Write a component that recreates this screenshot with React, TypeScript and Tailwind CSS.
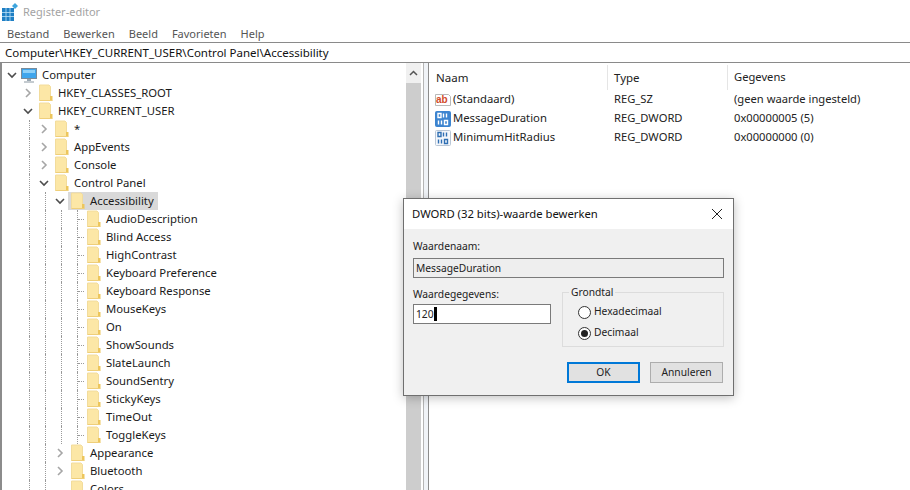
const menus = ['Bestand', 'Bewerken', 'Beeld', 'Favorieten', 'Help'];

type Node = { label: string; level: number; arrow?: 'open' | 'closed'; selected?: boolean };

const tree: Node[] = [
  { label: 'HKEY_CLASSES_ROOT', level: 1, arrow: 'closed' },
  { label: 'HKEY_CURRENT_USER', level: 1, arrow: 'open' },
  { label: '*', level: 2, arrow: 'closed' },
  { label: 'AppEvents', level: 2, arrow: 'closed' },
  { label: 'Console', level: 2, arrow: 'closed' },
  { label: 'Control Panel', level: 2, arrow: 'open' },
  { label: 'Accessibility', level: 3, arrow: 'open', selected: true },
  { label: 'AudioDescription', level: 4 },
  { label: 'Blind Access', level: 4 },
  { label: 'HighContrast', level: 4 },
  { label: 'Keyboard Preference', level: 4 },
  { label: 'Keyboard Response', level: 4 },
  { label: 'MouseKeys', level: 4 },
  { label: 'On', level: 4 },
  { label: 'ShowSounds', level: 4 },
  { label: 'SlateLaunch', level: 4 },
  { label: 'SoundSentry', level: 4 },
  { label: 'StickyKeys', level: 4 },
  { label: 'TimeOut', level: 4 },
  { label: 'ToggleKeys', level: 4 },
  { label: 'Appearance', level: 3, arrow: 'closed' },
  { label: 'Bluetooth', level: 3, arrow: 'closed' },
  { label: 'Colors', level: 3 },
];

const values = [
  { name: '(Standaard)', type: 'REG_SZ', data: '(geen waarde ingesteld)', icon: 'ab' },
  { name: 'MessageDuration', type: 'REG_DWORD', data: '0x00000005 (5)', icon: 'bin', active: true },
  { name: 'MinimumHitRadius', type: 'REG_DWORD', data: '0x00000000 (0)', icon: 'bin' },
];

function Chevron({ open }: { open: boolean }) {
  return (
    <svg width="16" height="18" viewBox="0 0 16 18" fill="none" stroke={open ? '#4d4d4d' : '#a6a6a6'} strokeWidth="1.6">
      {open ? <path d="M4 7l4 4 4-4" /> : <path d="M6 5l4 4-4 4" />}
    </svg>
  );
}

function Folder() {
  return (
    <svg width="14" height="18" viewBox="0 0 14 18" className="shrink-0">
      <path d="M0.500 1h9.500l1.500 1.500V16.500H0.500z" fill="#fce7a6" stroke="#f2dc9c" />
      <path d="M11 12h2.500v4.500H11z" fill="#edc65c" />
      <path d="M0.500 16.500h13" stroke="#efcf7a" />
    </svg>
  );
}

function MonitorIcon() {
  return (
    <svg width="16" height="16" viewBox="0 0 16 16" className="shrink-0">
      <rect x="0.5" y="1.5" width="15" height="10" fill="#3fa5ec" stroke="#7a8b99" />
      <rect x="2" y="3" width="12" height="3" fill="#8fd0f7" />
      <path d="M6 12h4v2H6z" fill="#9aa7b1" />
      <path d="M3 15h10" stroke="#8a97a1" />
    </svg>
  );
}

function ValueIcon({ kind, active }: { kind: string; active?: boolean }) {
  if (kind === 'ab') {
    return (
      <svg width="16" height="16" viewBox="0 0 16 16" className="shrink-0">
        <path d="M0.500 2.500h13l2 2v9H0.500z" fill="#fff" stroke="#b9b9b9" />
        <text x="1" y="10.500" fontSize="10" fontWeight="700" fontFamily="Liberation Sans" fill="#d2492a">ab</text>
      </svg>
    );
  }
  const ink = active ? '#fff' : '#2f6fb3';
  return (
    <svg width="16" height="16" viewBox="0 0 16 16" className="shrink-0">
      <rect x="0.5" y="0.5" width="15" height="15" rx="1" fill={active ? '#3c84d0' : '#f4f7fb'} stroke={active ? '#3c84d0' : '#b9c6d6'} />
      <path d="M3 2.500h3v4H3zM8.500 2.500v4M11.500 2.500v4M3.500 9.500v4M6.500 9.500v4M9.500 9.500h3v4h-3z" fill="none" stroke={ink} strokeWidth="1.4" />
    </svg>
  );
}

function TreeRow({ node }: { node: Node }) {
  return (
    <div className="flex h-[18px] items-center">
      <div className="w-[2px] shrink-0" />
      {/* guides for the open parents */}
      {node.level >= 1 && <div className="h-full w-4 shrink-0" />}
      {node.level >= 2 && <div className="ml-[9px] h-full w-[7px] shrink-0 border-l border-dotted border-[#9a9a9a]" />}
      {node.level >= 3 && <div className="ml-[9px] h-full w-[7px] shrink-0 border-l border-dotted border-[#9a9a9a]" />}
      {node.level >= 4 && <div className="ml-[9px] h-full w-[7px] shrink-0 border-l border-dotted border-[#9a9a9a]" />}
      {node.level === 4 ? (
        <div className="ml-[9px] flex h-full w-[7px] shrink-0 flex-col border-l border-dotted border-[#9a9a9a]">
          <div className="h-[9px]" />
          <div className="border-t border-dotted border-[#9a9a9a]" />
        </div>
      ) : (
        <div className="w-4 shrink-0">{node.arrow && <Chevron open={node.arrow === 'open'} />}</div>
      )}
      <div className={`flex h-full items-center pl-[3px] ${node.selected ? 'bg-[#d9d9d9]' : ''}`}>
        <Folder />
        <span className="whitespace-nowrap pl-[5px] pr-[4px] text-[11.3px] text-[#1a1a1a]">{node.label}</span>
      </div>
    </div>
  );
}

function Dialog() {
  return (
    <div className="absolute left-[403px] top-[198px] h-[198px] w-[331px] border border-[#6f6f6f] bg-[#f0f0f0] shadow-[0_2px_10px_rgba(0,0,0,0.25)]">
      <div className="flex h-[30px] items-center justify-between bg-white pl-[8px] pr-[10px]">
        <span className="text-[11.3px] text-[#111]">DWORD (32 bits)-waarde bewerken</span>
        <svg width="12" height="12" viewBox="0 0 12 12" stroke="#222" strokeWidth="1">
          <path d="M1 1l10 10M11 1L1 11" />
        </svg>
      </div>
      <div className="px-[9px] pt-[8px] text-[10.25px] text-[#222]">
        <div className="leading-[18px]">Waardenaam:</div>
        <div className="mt-[3px] flex h-[20px] items-center border border-[#7a7a7a] bg-[#eeeeee] pl-[2px] leading-none">
          MessageDuration
        </div>
        <div className="mt-[7px] flex gap-[11px]">
          <div className="w-[138px]">
            <div className="leading-[18px]">Waardegegevens:</div>
            <div className="mt-[1px] flex h-[20px] items-center border border-[#7a7a7a] bg-white pl-[2px] leading-none">
              120
              <span className="h-[14px] w-[3px] bg-black" />
            </div>
          </div>
          <div className="relative mt-[7px] h-[55px] w-[162px] border border-[#dcdcdc] pl-[15px] pt-[9px]">
            <span className="absolute -top-[8px] left-[6px] bg-[#f0f0f0] px-[2px] leading-[14px]">Grondtal</span>
            <div className="flex h-[20px] items-center gap-[3px]">
              <span className="h-[13px] w-[13px] rounded-full border border-[#333] bg-white" />
              Hexadecimaal
            </div>
            <div className="mt-[1px] flex h-[20px] items-center gap-[3px]">
              <span className="flex h-[13px] w-[13px] items-center justify-center rounded-full border border-[#333] bg-white">
                <span className="h-[7px] w-[7px] rounded-full bg-[#222]" />
              </span>
              Decimaal
            </div>
          </div>
        </div>
        <div className="mt-[15px] flex justify-end gap-[10px] pr-[1px]">
          <div className="flex h-[21px] w-[73px] items-center justify-center border-2 border-[#0078d7] bg-[#e1e1e1]">OK</div>
          <div className="flex h-[21px] w-[73px] items-center justify-center border border-[#adadad] bg-[#e1e1e1]">Annuleren</div>
        </div>
      </div>
    </div>
  );
}

export default function App() {
  return (
    <div className="relative flex h-[490px] w-[910px] flex-col overflow-hidden bg-white font-['Noto_Sans','Open_Sans',sans-serif] text-[11.5px]">
      {/* Titel */}
      <div className="flex h-[24px] shrink-0 items-center pl-[2px]">
        <svg width="16" height="18" viewBox="0 0 16 18" className="shrink-0">
          <path d="M0 5h12v13H0z" fill="#1f7fc4" />
          <path d="M4 5v13M8 5v13M0 9.500h12M0 13.500h12" stroke="#bfe2f7" strokeWidth="0.8" />
          <path d="M13 0l3 3-3 3-3-3z" fill="#3fa5dd" />
        </svg>
        <span className="pl-[5px] text-[11px] text-[#a3a3a3]">Register-editor</span>
      </div>
      {/* Menu */}
      <div className="flex h-[18px] shrink-0 items-center gap-[14px] pl-[7px] pt-[2px] text-[11px] text-[#555]">
        {menus.map((m) => (
          <span key={m}>{m}</span>
        ))}
      </div>
      {/* Adres */}
      <div className="flex h-[21px] shrink-0 items-center border-y border-[#8a8a8a] pl-[5px] pt-px text-[#111]">
        Computer\HKEY_CURRENT_USER\Control Panel\Accessibility
      </div>
      <div className="flex min-h-0 flex-1 border-l-2 border-[#8c8c8c]">
        {/* Boom */}
        <div className="flex w-[404px] shrink-0 flex-col overflow-hidden pt-[3px]">
          <div className="flex h-[18px] items-center">
            <div className="w-[2px] shrink-0" />
            <div className="w-4 shrink-0"><Chevron open /></div>
            <div className="pl-[1px]"><MonitorIcon /></div>
            <span className="pl-[5px] text-[11.3px] text-[#1a1a1a]">Computer</span>
          </div>
          {tree.map((n) => (
            <TreeRow key={n.label} node={n} />
          ))}
        </div>
        {/* Scrollbar */}
        <div className="flex w-[15px] shrink-0 flex-col bg-[#f0f0f0]">
          <div className="flex h-[20px] items-center justify-center">
            <svg width="9" height="6" viewBox="0 0 9 6" fill="none" stroke="#555" strokeWidth="1.5">
              <path d="M1 5l3.500-3.500L8 5" />
            </svg>
          </div>
          <div className="flex-1 bg-[#cdcdcd]" />
        </div>
        {/* Splitter */}
        <div className="ml-[2px] w-[5px] shrink-0 border-l border-[#b5b5b5] bg-[#f0f3f7]" />
        {/* Waarden */}
        <div className="flex min-w-0 flex-1 flex-col border-l border-[#8c8c8c] text-[#222]">
          <div className="flex h-[27px] shrink-0 items-center pt-[2px]">
            <div className="flex h-full w-[179px] items-center border-r border-[#e5e5e5] pl-[7px]">Naam</div>
            <div className="flex h-full w-[120px] items-center border-r border-[#e5e5e5] pl-[6px]">Type</div>
            <div className="pl-[6px] text-[11.2px]">Gegevens</div>
          </div>
          {values.map((v) => (
            <div key={v.name} className="flex h-[19px] shrink-0 items-center">
              <div className="flex w-[179px] items-center gap-[2px] pl-[6px]">
                <ValueIcon kind={v.icon} active={v.active} />
                <span className="text-[11.3px]">{v.name}</span>
              </div>
              <div className="w-[120px] pl-[6px] text-[11.2px]">{v.type}</div>
              <div className="pl-[6px] text-[11.2px]">{v.data}</div>
            </div>
          ))}
        </div>
      </div>
      <Dialog />
    </div>
  );
}
